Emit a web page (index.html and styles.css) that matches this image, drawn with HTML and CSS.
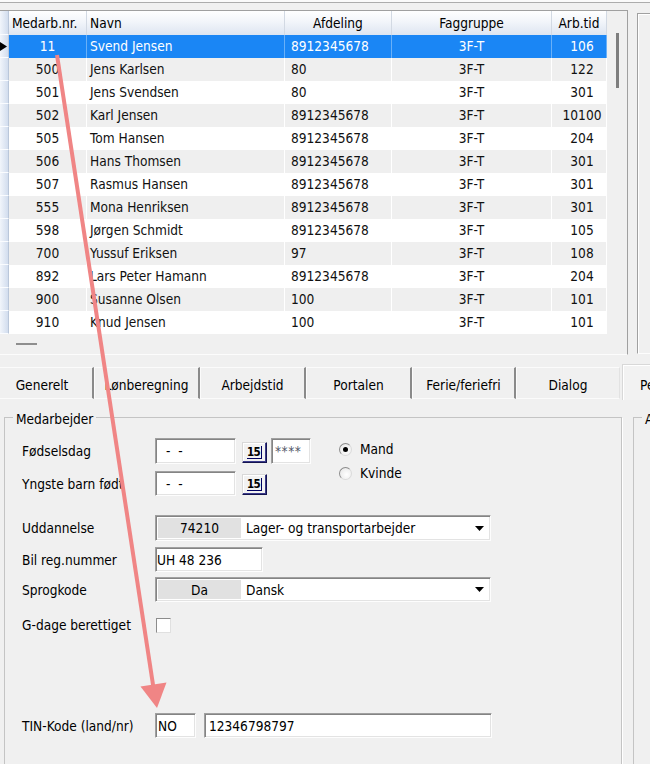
FILE: index.html
```html
<!DOCTYPE html>
<html lang="da">
<head>
<meta charset="utf-8">
<title>Medarbejder</title>
<link rel="stylesheet" href="styles.css">
</head>
<body>
<div class="app">
  <div class="topstrip"></div>
  <div class="upper">
    <div class="gridpanel">
      <div class="gridmain">
        <table class="grid">
          <colgroup>
            <col class="w-ind"><col class="w-nr"><col class="w-navn"><col class="w-afd"><col class="w-fag"><col class="w-tid">
          </colgroup>
          <thead>
            <tr><th class="ind"></th><th class="h-left">Medarb.nr.</th><th class="h-left">Navn</th><th>Afdeling</th><th>Faggruppe</th><th>Arb.tid</th></tr>
          </thead>
          <tbody>
            <tr class="sel"><td class="ind"><svg class="pointer" width="7" height="9" viewBox="0 0 7 9"><polygon points="0,0 7,4.5 0,9" fill="#000"/></svg></td><td class="nr">11</td><td class="navn">Svend Jensen</td><td class="afd">8912345678</td><td class="fag">3F-T</td><td class="tid">106</td></tr>
            <tr class="alt"><td class="ind"></td><td class="nr">500</td><td class="navn">Jens Karlsen</td><td class="afd">80</td><td class="fag">3F-T</td><td class="tid">122</td></tr>
            <tr><td class="ind"></td><td class="nr">501</td><td class="navn">Jens Svendsen</td><td class="afd">80</td><td class="fag">3F-T</td><td class="tid">301</td></tr>
            <tr class="alt"><td class="ind"></td><td class="nr">502</td><td class="navn">Karl Jensen</td><td class="afd">8912345678</td><td class="fag">3F-T</td><td class="tid">10100</td></tr>
            <tr><td class="ind"></td><td class="nr">505</td><td class="navn">Tom Hansen</td><td class="afd">8912345678</td><td class="fag">3F-T</td><td class="tid">204</td></tr>
            <tr class="alt"><td class="ind"></td><td class="nr">506</td><td class="navn">Hans Thomsen</td><td class="afd">8912345678</td><td class="fag">3F-T</td><td class="tid">301</td></tr>
            <tr><td class="ind"></td><td class="nr">507</td><td class="navn">Rasmus Hansen</td><td class="afd">8912345678</td><td class="fag">3F-T</td><td class="tid">301</td></tr>
            <tr class="alt"><td class="ind"></td><td class="nr">555</td><td class="navn">Mona Henriksen</td><td class="afd">8912345678</td><td class="fag">3F-T</td><td class="tid">301</td></tr>
            <tr><td class="ind"></td><td class="nr">598</td><td class="navn">Jørgen Schmidt</td><td class="afd">8912345678</td><td class="fag">3F-T</td><td class="tid">105</td></tr>
            <tr class="alt"><td class="ind"></td><td class="nr">700</td><td class="navn">Yussuf Eriksen</td><td class="afd">97</td><td class="fag">3F-T</td><td class="tid">108</td></tr>
            <tr><td class="ind"></td><td class="nr">892</td><td class="navn">Lars Peter Hamann</td><td class="afd">8912345678</td><td class="fag">3F-T</td><td class="tid">204</td></tr>
            <tr class="alt"><td class="ind"></td><td class="nr">900</td><td class="navn">Susanne Olsen</td><td class="afd">100</td><td class="fag">3F-T</td><td class="tid">101</td></tr>
            <tr><td class="ind"></td><td class="nr">910</td><td class="navn">Knud Jensen</td><td class="afd">100</td><td class="fag">3F-T</td><td class="tid">101</td></tr>
          </tbody>
        </table>
        <div class="hscroll"><span class="hthumb"></span></div>
      </div>
      <div class="vscroll"><span class="vthumb"></span></div>
    </div>
    <div class="sidepanel"></div>
  </div>

  <div class="tabs">
    <div class="tab first">Generelt</div>
    <div class="tab">Lønberegning</div>
    <div class="tab">Arbejdstid</div>
    <div class="tab">Portalen</div>
    <div class="tab narrow">Ferie/feriefri</div>
    <div class="tab narrow last">Dialog</div>
    <div class="tab active">Pe</div>
  </div>

  <div class="page">
    <fieldset class="group main">
      <legend>Medarbejder</legend>
      <div class="toprows">
        <div class="lbl">Fødselsdag</div>
        <div class="fields">
          <div class="input date">-  -</div>
          <div class="calbtn"><span class="cal">15</span></div>
          <div class="input stars">****</div>
        </div>
        <div class="radios">
          <div class="radio"><span class="dot on"></span>Mand</div>
          <div class="radio"><span class="dot"></span>Kvinde</div>
        </div>
        <div class="lbl">Yngste barn født</div>
        <div class="fields">
          <div class="input date">-  -</div>
          <div class="calbtn"><span class="cal">15</span></div>
        </div>
      </div>

      <div class="row r-udd">
        <div class="lbl">Uddannelse</div>
        <div class="combo">
          <div class="code">74210</div>
          <div class="ctext">Lager- og transportarbejder</div>
          <div class="drop"><svg width="9" height="5" viewBox="0 0 9 5"><polygon points="0,0 9,0 4.5,5" fill="#000"/></svg></div>
        </div>
      </div>
      <div class="row r-bil">
        <div class="lbl">Bil reg.nummer</div>
        <div class="input reg">UH 48 236</div>
      </div>
      <div class="row r-sprog">
        <div class="lbl">Sprogkode</div>
        <div class="combo">
          <div class="code">Da</div>
          <div class="ctext">Dansk</div>
          <div class="drop"><svg width="9" height="5" viewBox="0 0 9 5"><polygon points="0,0 9,0 4.5,5" fill="#000"/></svg></div>
        </div>
      </div>
      <div class="row r-g">
        <div class="lbl">G-dage berettiget</div>
        <div class="chk"></div>
      </div>
      <div class="row r-tin">
        <div class="lbl">TIN-Kode (land/nr)</div>
        <div class="input land">NO</div>
        <div class="input tinnr">12346798797</div>
      </div>
    </fieldset>
    <fieldset class="group side">
      <legend>A</legend>
    </fieldset>
  </div>

  <svg class="arrow" width="650" height="764" viewBox="0 0 650 764">
    <line x1="57" y1="55" x2="153.5" y2="688" stroke="#f08585" stroke-width="4"/>
    <polygon points="140.5,686.5 166.5,682.5 157,708" fill="#f08585"/>
  </svg>
</div>
</body>
</html>
```
FILE: styles.css
```css
html, body {
  margin: 0;
  padding: 0;
  background: #f0f0f0;
  overflow: hidden;
}
body {
  font-family: "DejaVu Sans Condensed", "DejaVu Sans", sans-serif;
  font-stretch: condensed;
  font-size: 13.6px;
  color: #000;
}
.app {
  position: relative;
  width: 650px;
  height: 764px;
  overflow: hidden;
}

/* top strip */
.topstrip {
  height: 2px;
  background: #fafafa;
  border-bottom: 1px solid #acacac;
  margin-bottom: 7px;
}

/* upper area */
.upper {
  display: flex;
  height: 345px;
}
.gridpanel {
  width: 627px;
  height: 343px;
  display: flex;
  border-top: 1px solid #a0a0a0;
  border-right: 1px solid #a0a0a0;
  border-bottom: 1px solid #fcfcfc;
}
.gridmain {
  width: 607px;
  display: flex;
  flex-direction: column;
}
.grid {
  width: 607px;
  table-layout: fixed;
  border-collapse: separate;
  border-spacing: 0;
}
.w-ind { width: 9px; }
.w-nr { width: 78px; }
.w-navn { width: 198px; }
.w-afd { width: 107px; }
.w-fag { width: 160px; }
.w-tid { width: 55px; }

.grid thead tr { height: 24px; }
.grid tbody tr { height: 23px; }
.grid th {
  font-weight: normal;
  padding: 0 3px;
  text-align: center;
  white-space: nowrap;
  background: linear-gradient(#ffffff, #f2f5fa 45%, #dde5f1);
  border-right: 1px solid #d2d9e3;
  line-height: 16px;
}
.grid th.h-left { text-align: left; }
.grid td {
  padding: 0 3px 2px;
  white-space: nowrap;
  overflow: hidden;
  line-height: 16px;
  border-right: 1px solid #ffffff;
  background: #ffffff;
  color: #111;
}
.grid tr.alt td { background: #efefef; }
.grid tr.sel td {
  background: #1a86f5;
  color: #fff;
  border-right-color: rgba(255, 255, 255, 0.35);
}
.grid th.ind,
.grid td.ind,
.grid tr.alt td.ind,
.grid tr.sel td.ind {
  padding: 0;
  background: linear-gradient(to right, #f1f5fb, #d2ddee);
  border-right: 1px solid #bac7da;
  border-bottom: 1px solid #fafcff;
}
.pointer { display: block; }
.grid td.nr { text-align: center; }
.grid td.navn { text-align: left; }
.grid td.afd { text-align: left; padding-left: 6px; }
.grid td.fag { text-align: center; }
.grid td.tid { text-align: center; padding-left: 9px; }

.hscroll {
  height: 20px;
  display: flex;
  align-items: flex-start;
}
.hthumb {
  display: block;
  width: 21px;
  height: 2px;
  margin: 9px 0 0 16px;
  background: #8e8e8e;
}
.vscroll {
  width: 20px;
}
.vthumb {
  display: block;
  width: 3px;
  height: 55px;
  margin: 22px 0 0 9px;
  background: #7e7e7e;
}
.sidepanel {
  flex: 1;
  margin: 3px 0 0 9px;
  height: 339px;
  border-left: 1px solid #a0a0a0;
  border-top: 1px solid #a0a0a0;
  border-bottom: 1px solid #fdfdfd;
  box-shadow: inset 1px 1px 0 #ffffff;
}

/* tabs */
.tabs {
  display: flex;
  height: 36px;
  margin-top: 9px;
}
.tab {
  box-sizing: border-box;
  flex: none;
  width: 106px;
  height: 32px;
  margin-top: 3px;
  padding-top: 4px;
  border-top: 1px solid #fbfbfb;
  border-left: 1px solid #fbfbfb;
  border-right: 2px solid #8a8a8a;
  border-bottom: 1px solid #fbfbfb;
  display: flex;
  align-items: center;
  justify-content: center;
  white-space: nowrap;
}
.tab.first {
  width: 94px;
  border-left: none;
  padding-right: 8px;
}
.tab.narrow { width: 104px; }
.tab.last {
  border-right: 1px solid #e2e2e2;
  margin-right: 2px;
}
.tab.active {
  flex: 1;
  width: auto;
  height: 36px;
  margin-top: 0;
  padding-top: 5px;
  justify-content: flex-start;
  padding-left: 17px;
  border-top: 1px solid #d8d8d8;
  border-left: 1px solid #d8d8d8;
  border-right: none;
  border-bottom: none;
  box-shadow: inset 1px 1px 0 #ffffff;
  background: #f2f2f2;
  overflow: hidden;
}

/* tab page */
.page {
  display: flex;
  gap: 11px;
  padding-left: 4px;
}
.group {
  box-sizing: border-box;
  margin: 8px 0 0 0;
  padding: 12px 0 0 17px;
  height: 420px;
  min-width: 0;
  border: 1px solid #c4c4c4;
  box-shadow: 1px 1px 0 #ffffff;
  flex: none;
}
.group legend {
  margin-left: -9px;
  padding: 4px 3px 0;
  line-height: 14px;
  background: #f0f0f0;
}
.group.main { width: 618px; }
.group.side { width: 120px; }

.lbl {
  width: 133px;
  flex: none;
  white-space: nowrap;
}

.toprows {
  display: grid;
  grid-template-columns: 133px 156px auto;
  grid-template-rows: 26px 25px;
  row-gap: 7px;
  align-items: center;
}
.fields {
  display: flex;
  height: 100%;
}
.radios {
  grid-column: 3;
  grid-row: 1 / 3;
  align-self: start;
  margin-top: -1px;
  padding-left: 28px;
}
.radio {
  height: 24px;
  display: flex;
  align-items: center;
}
.dot {
  box-sizing: border-box;
  width: 13px;
  height: 13px;
  border-radius: 50%;
  border: 1px solid;
  border-color: #8c8c8c #dadada #dadada #8c8c8c;
  background: radial-gradient(circle at 60% 60%, #ffffff, #e4e4e4);
  margin-right: 8px;
}
.dot.on::after {
  content: "";
  display: block;
  width: 5px;
  height: 5px;
  margin: 3px;
  border-radius: 50%;
  background: #000;
}

.input {
  box-sizing: border-box;
  background: #fff;
  border: 1px solid;
  border-color: #a0a0a0 #fdfdfd #fdfdfd #a0a0a0;
  box-shadow: inset 1px 1px 0 #848484, inset -1px -1px 0 #e3e3e3;
  display: flex;
  align-items: center;
  white-space: pre;
  height: 100%;
}
.input.date {
  width: 81px;
  padding-left: 10px;
}
.input.stars {
  width: 40px;
  margin-left: 4px;
  padding-left: 3px;
  align-items: flex-start;
  padding-top: 4px;
  color: #505566;
  letter-spacing: 0.5px;
}
.calbtn {
  box-sizing: border-box;
  width: 25px;
  height: 21px;
  margin-left: 6px;
  align-self: flex-end;
  margin-bottom: 1px;
  border: 1px solid;
  border-color: #d8d8d8 #141450 #141450 #d8d8d8;
  box-shadow: inset -1px -1px 0 #3c3c8c, inset 1px 1px 0 #ffffff;
  background: #f2f2f2;
  display: flex;
  align-items: center;
  justify-content: center;
}
.cal {
  font-family: "DejaVu Sans", sans-serif;
  font-size: 11.5px;
  font-weight: bold;
  line-height: 12px;
  letter-spacing: -0.8px;
  padding: 0 1px 0 0;
  border-bottom: 1px solid #000060;
  border-right: 1px solid #000060;
}

.row {
  display: flex;
  align-items: center;
}
.r-udd { margin-top: 19px; height: 26px; }
.r-bil { margin-top: 6px; height: 25px; }
.r-sprog { margin-top: 5px; height: 25px; }
.r-g { margin-top: 10px; height: 26px; }
.r-tin { margin-top: 75px; height: 25px; }

.combo {
  box-sizing: border-box;
  width: 336px;
  height: 100%;
  display: flex;
  background: #fff;
  border: 1px solid;
  border-color: #a0a0a0 #fdfdfd #fdfdfd #a0a0a0;
  box-shadow: inset 1px 1px 0 #848484, inset -1px -1px 0 #e3e3e3;
  padding: 2px 1px 2px 2px;
}
.code {
  width: 83px;
  background: #e1e1e1;
  display: flex;
  align-items: center;
  justify-content: center;
}
.ctext {
  flex: 1;
  padding-left: 5px;
  display: flex;
  align-items: center;
  white-space: nowrap;
}
.drop {
  width: 20px;
  display: flex;
  align-items: center;
  justify-content: center;
}
.drop svg { display: block; }

.input.reg {
  width: 108px;
  padding-left: 1px;
}
.chk {
  box-sizing: border-box;
  width: 15px;
  height: 15px;
  margin-left: 1px;
  background: #fff;
  border: 1px solid;
  border-color: #8c8c8c #e0e0e0 #e0e0e0 #8c8c8c;
}
.input.land {
  width: 41px;
  padding-left: 2px;
}
.input.tinnr {
  width: 288px;
  margin-left: 8px;
  padding-left: 4px;
}

.arrow {
  position: absolute;
  left: 0;
  top: 0;
  pointer-events: none;
}
```
